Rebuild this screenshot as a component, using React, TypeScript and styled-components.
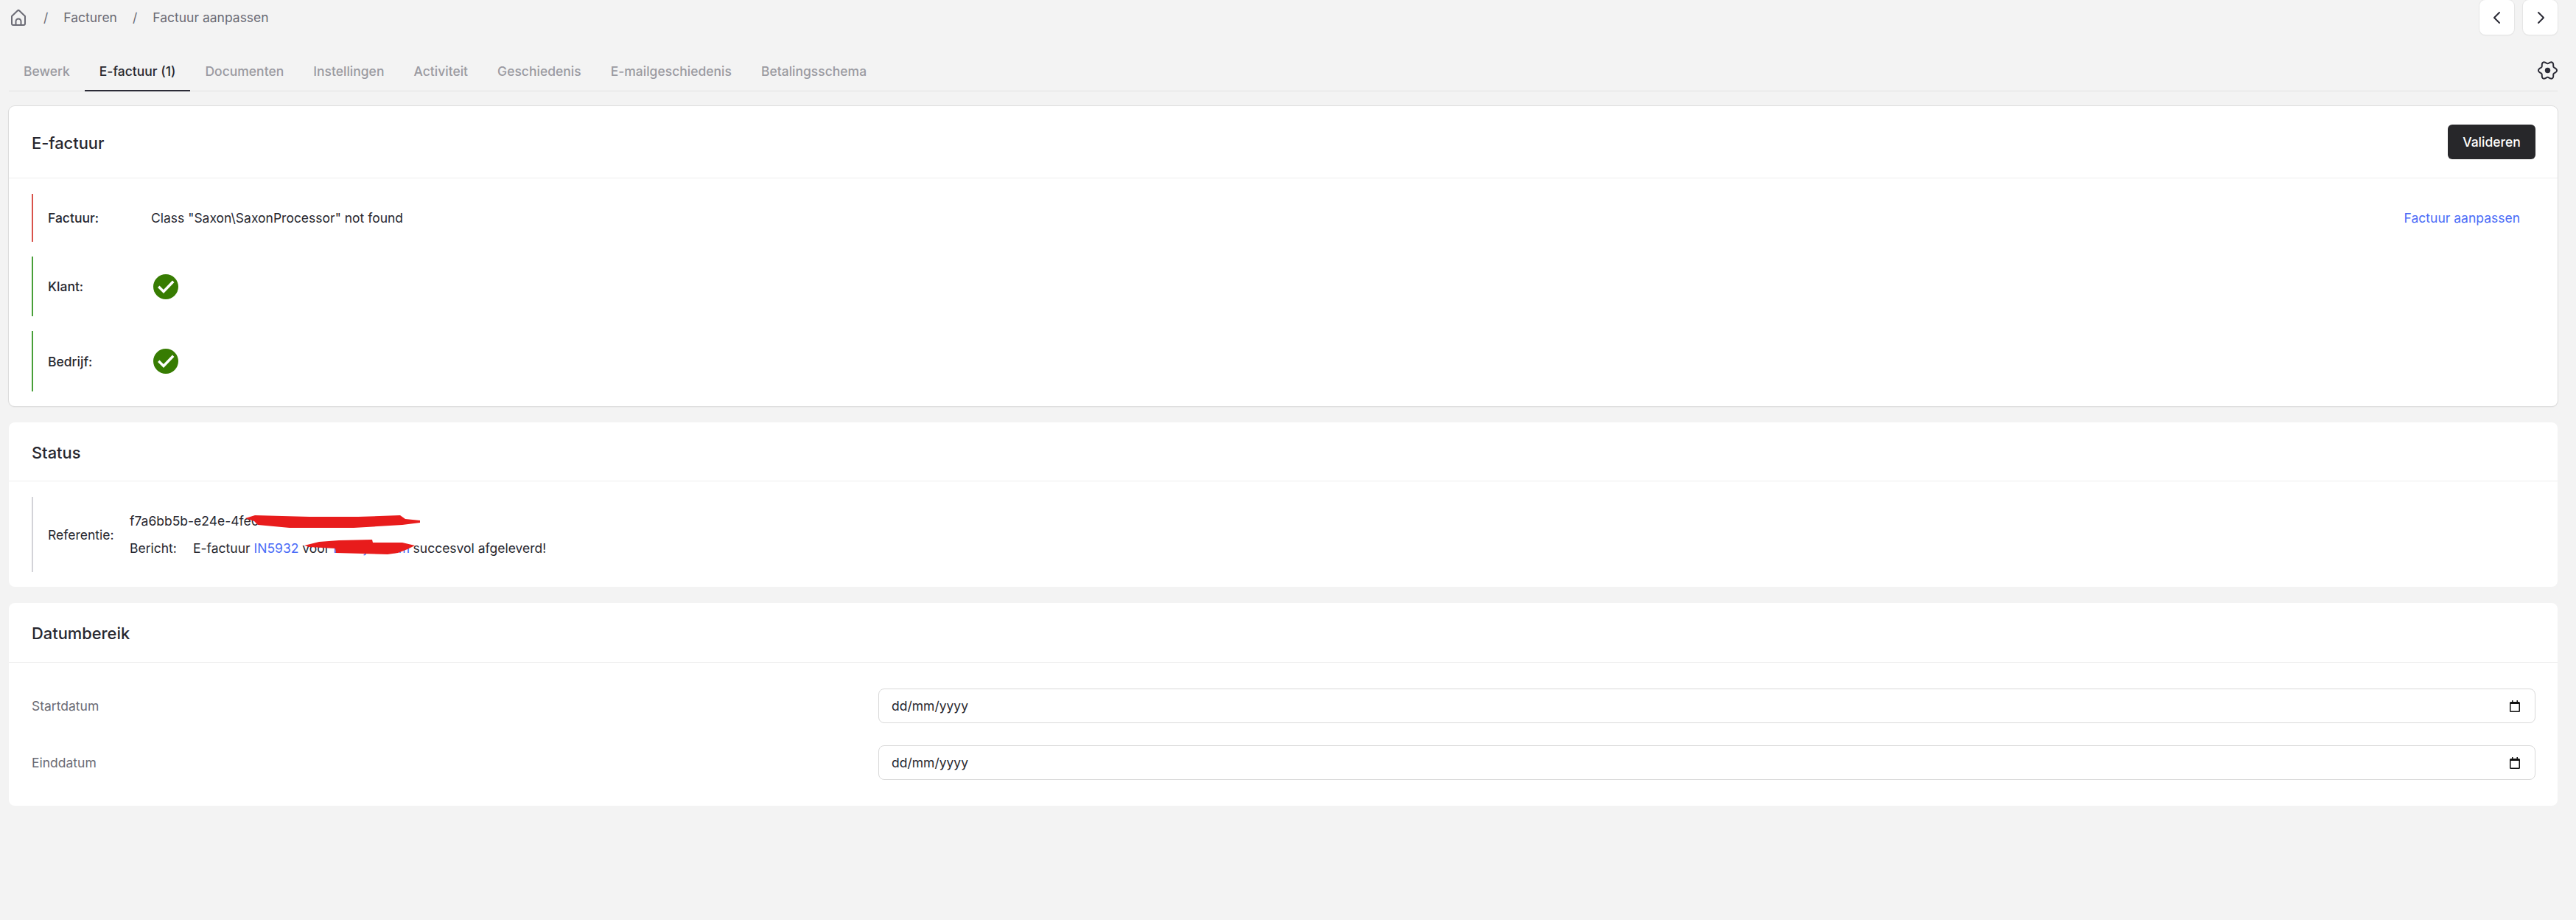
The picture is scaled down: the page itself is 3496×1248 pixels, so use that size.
import React from 'react';
import styled, { createGlobalStyle } from 'styled-components';

const Global = createGlobalStyle`
  html, body { margin: 0; padding: 0; background: #f3f3f3; }
  body { font-family: Inter, "Liberation Sans", sans-serif; font-size: 17.5px; color: #27272f; }
  * { box-sizing: border-box; }
`;

const Page = styled.div`
  width: 3496px;
  min-height: 1248px;
  padding: 0 25px 0 12px;
  background: #f3f3f3;
`;

const TopBar = styled.div`
  height: 47px;
  display: flex;
  align-items: center;
  justify-content: space-between;
`;

const Breadcrumb = styled.nav`
  display: flex;
  align-items: center;
  padding-left: 1px;
  color: #6b6b75;
`;

const Crumb = styled.span`
  line-height: 24px;
`;

const Slash = styled.span`
  margin: 0 21px;
  color: #6b6b75;
`;

const HomeGlyph = styled.svg`
  display: block;
  width: 24px;
  height: 24px;
  margin-right: 1px;
`;

const Pager = styled.div`
  display: flex;
  gap: 12px;
`;

const PagerButton = styled.button`
  width: 47px;
  height: 47px;
  padding: 0;
  display: flex;
  align-items: center;
  justify-content: center;
  background: #fff;
  border: 0;
  border-radius: 8px;
  box-shadow: 0 0 0 1px #e6e6e6, 0 1px 2px rgba(0, 0, 0, 0.08);
  color: #2b2b36;
`;

const Tabs = styled.div`
  margin-top: 23px;
  height: 54px;
  display: flex;
  align-items: stretch;
  border-bottom: 1px solid #e2e2e2;
`;

const Tab = styled.div<{ $active?: boolean }>`
  padding: 0 20px;
  display: flex;
  align-items: center;
  margin-bottom: -1px;
  font-weight: 500;
  color: ${p => (p.$active ? '#27272f' : '#9a9aa1')};
  border-bottom: 2px solid ${p => (p.$active ? '#2b2b36' : 'transparent')};
`;

const GearSlot = styled.div`
  margin-left: auto;
  padding-bottom: 2px;
  display: flex;
  align-items: center;
  color: #2b2b36;
`;

const Card = styled.section<{ $outlined?: boolean }>`
  background: #fff;
  border-radius: 8px;
  margin-top: ${p => (p.$outlined ? '20px' : '22px')};
  ${p => p.$outlined && 'box-shadow: 0 0 0 1px #dcdcdc, 0 1px 2px rgba(0, 0, 0, 0.1);'}
`;

const CardHeader = styled.header<{ $h: number }>`
  height: ${p => p.$h}px;
  padding: 0 30px 0 31px;
  display: flex;
  align-items: center;
  justify-content: space-between;
  border-bottom: 1px solid #eeeeee;
`;

const Title = styled.h2`
  margin: 2px 0 0;
  font-size: 21.875px;
  font-weight: 500;
  color: #27272f;
`;

const PrimaryButton = styled.button`
  height: 47px;
  width: 119px;
  padding: 0;
  border: 0;
  border-radius: 6px;
  background: #27272a;
  color: #fff;
  font: 500 17.5px Inter, "Liberation Sans", sans-serif;
`;

const StatusList = styled.div`
  padding: 21px 31px 20px;
  display: flex;
  flex-direction: column;
  gap: 20px;
`;

const StatusRow = styled.div<{ $tone: string; $h: number }>`
  height: ${p => p.$h}px;
  padding-left: 20px;
  display: flex;
  align-items: center;
  border-left: 2px solid ${p => p.$tone};
`;

const RowLabel = styled.div`
  width: 140px;
  font-weight: 500;
  color: #27272f;
`;

const RowValue = styled.div`
  flex: 1;
  color: #27272f;
`;

const TextLink = styled.a`
  color: #4a6cf7;
  text-decoration: none;
`;

const EditLink = styled(TextLink)`
  margin-right: 20px;
`;

const HiddenName = styled(TextLink)`
  letter-spacing: -0.42px;
`;

const CheckGlyph = styled.svg`
  display: block;
  width: 34px;
  height: 34px;
  margin-left: 3px;
`;

const ReferenceBody = styled.div`
  padding: 21px 31px 20px;
`;

const ReferenceRow = styled.div`
  height: 102px;
  padding-left: 20px;
  display: flex;
  align-items: center;
  border-left: 2px solid #d3d3d8;
`;

const ReferenceLabel = styled.div`
  width: 111px;
  color: #27272f;
`;

const ReferenceLines = styled.div`
  display: flex;
  flex-direction: column;
  gap: 13px;
  line-height: 24px;
`;

const ReferenceLine = styled.div`
  position: relative;
  display: flex;
  white-space: pre;
`;

const MessageLabel = styled.span`
  width: 86px;
`;

const Scribble = styled.svg<{ $l: number; $w: number; $h: number; $t: number }>`
  position: absolute;
  left: ${p => p.$l}px;
  top: ${p => p.$t}px;
  width: ${p => p.$w}px;
  height: ${p => p.$h}px;
`;

const DateBody = styled.div`
  padding: 35px 30px 35px 31px;
  display: flex;
  flex-direction: column;
  gap: 30px;
`;

const DateRow = styled.div`
  display: grid;
  grid-template-columns: 1149px 1fr;
  align-items: center;
`;

const DateLabel = styled.label`
  color: #6b6b74;
`;

const DateField = styled.div`
  height: 47px;
  padding: 0 20px 0 17px;
  display: flex;
  align-items: center;
  justify-content: space-between;
  border: 1px solid #d9d9d9;
  border-radius: 8px;
  color: #27272f;
`;

const CalendarGlyph = styled.svg`
  display: block;
  width: 14px;
  height: 16px;
`;

const Home = () => (
  <HomeGlyph viewBox="0 0 24 24" fill="none" stroke="#6b6b75" strokeWidth="2" strokeLinecap="round" strokeLinejoin="round">
    <path d="M3 10 10.800 2.500a1.700 1.700 0 0 1 2.400 0L21 10v10a2 2 0 0 1-2 2H5a2 2 0 0 1-2-2z" />
    <path d="M8.500 22v-5a3.500 3.500 0 0 1 7 0v5" />
  </HomeGlyph>
);

const Check = () => (
  <CheckGlyph viewBox="0 0 34 34">
    <circle cx="17" cy="17" r="17" fill="#377c02" />
    <path d="M8.500 18 14 23.500 26 11" fill="none" stroke="#fff" strokeWidth="3.500" strokeLinecap="square" strokeLinejoin="miter" />
  </CheckGlyph>
);

const Calendar = () => (
  <CalendarGlyph viewBox="0 0 14 16">
    <path d="M3 0h1.500v2h5V0H11v2h1.500A1.500 1.500 0 0 1 14 3.500v11a1.500 1.500 0 0 1-1.500 1.500h-11A1.500 1.500 0 0 1 0 14.500v-11A1.500 1.500 0 0 1 1.500 2H3zM1.500 5v9.500h11V5z" fill="#111" fillRule="evenodd" />
  </CalendarGlyph>
);

const gearPath = (() => {
  const pts: string[] = [];
  for (let i = 0; i < 120; i++) {
    const a = (i / 120) * Math.PI * 2;
    const r = 10.9 + 1.6 * Math.cos(6 * a);
    pts.push(`${(13.5 + r * Math.cos(a)).toFixed(2)} ${(13.5 + r * Math.sin(a)).toFixed(2)}`);
  }
  return `M${pts.join('L')}Z`;
})();

const tabs = ['Bewerk', 'E-factuur (1)', 'Documenten', 'Instellingen', 'Activiteit', 'Geschiedenis', 'E-mailgeschiedenis', 'Betalingsschema'];

export default function App() {
  return (
    <Page>
      <Global />
      <TopBar>
        <Breadcrumb>
          <Home />
          <Slash>/</Slash>
          <Crumb>Facturen</Crumb>
          <Slash>/</Slash>
          <Crumb>Factuur aanpassen</Crumb>
        </Breadcrumb>
        <Pager>
          <PagerButton aria-label="Vorige">
            <svg width="24" height="24" viewBox="0 0 24 24" fill="none" stroke="currentColor" strokeWidth="2" strokeLinecap="round" strokeLinejoin="round"><path d="M15 5 8 12l7 7" /></svg>
          </PagerButton>
          <PagerButton aria-label="Volgende">
            <svg width="24" height="24" viewBox="0 0 24 24" fill="none" stroke="currentColor" strokeWidth="2" strokeLinecap="round" strokeLinejoin="round"><path d="m9 5 7 7-7 7" /></svg>
          </PagerButton>
        </Pager>
      </TopBar>

      <Tabs>
        {tabs.map(t => (
          <Tab key={t} $active={t.startsWith('E-factuur')}>{t}</Tab>
        ))}
        <GearSlot>
          <svg width="27" height="27" viewBox="0 0 27 27" fill="none">
            <path d={gearPath} stroke="currentColor" strokeWidth="2" strokeLinejoin="round" />
            <circle cx="13.500" cy="13.500" r="3.700" fill="currentColor" />
          </svg>
        </GearSlot>
      </Tabs>

      <Card $outlined>
        <CardHeader $h={98}>
          <Title>E-factuur</Title>
          <PrimaryButton>Valideren</PrimaryButton>
        </CardHeader>
        <StatusList>
          <StatusRow $tone="#d8524a" $h={65}>
            <RowLabel>Factuur:</RowLabel>
            <RowValue>Class "Saxon\SaxonProcessor" not found</RowValue>
            <EditLink>Factuur aanpassen</EditLink>
          </StatusRow>
          <StatusRow $tone="#489f38" $h={81}>
            <RowLabel>Klant:</RowLabel>
            <Check />
          </StatusRow>
          <StatusRow $tone="#489f38" $h={82}>
            <RowLabel>Bedrijf:</RowLabel>
            <Check />
          </StatusRow>
        </StatusList>
      </Card>

      <Card>
        <CardHeader $h={80}>
          <Title>Status</Title>
        </CardHeader>
        <ReferenceBody>
          <ReferenceRow>
            <ReferenceLabel>Referentie:</ReferenceLabel>
            <ReferenceLines>
              <ReferenceLine>
                f7a6bb5b-e24e-4fe0-b
                <Scribble $l={157} $t={3} $w={237} $h={18} viewBox="0 0 237 18" preserveAspectRatio="none">
                  <path d="M0 5 13 1 87 3 153 3 210 1 217 6 237 8 237 11 213 14 147 18 60 18 17 14 12 9z" fill="#e81c1c" />
                </Scribble>
              </ReferenceLine>
              <ReferenceLine>
                <MessageLabel>Bericht:</MessageLabel>
                E-factuur <TextLink>IN5932</TextLink> voor <HiddenName>Bedrijfsnaam</HiddenName> succesvol afgeleverd!
                <Scribble $l={237} $t={0} $w={150} $h={20} viewBox="0 0 150 20" preserveAspectRatio="none">
                  <path d="M0 8 20 3 47 1 92 0 93 4 133 4 150 8 140 13 127 18 113 20 43 18 42 12 7 10z" fill="#e81c1c" />
                </Scribble>
              </ReferenceLine>
            </ReferenceLines>
          </ReferenceRow>
        </ReferenceBody>
      </Card>

      <Card>
        <CardHeader $h={81}>
          <Title>Datumbereik</Title>
        </CardHeader>
        <DateBody>
          <DateRow>
            <DateLabel>Startdatum</DateLabel>
            <DateField>dd/mm/yyyy<Calendar /></DateField>
          </DateRow>
          <DateRow>
            <DateLabel>Einddatum</DateLabel>
            <DateField>dd/mm/yyyy<Calendar /></DateField>
          </DateRow>
        </DateBody>
      </Card>
    </Page>
  );
}
